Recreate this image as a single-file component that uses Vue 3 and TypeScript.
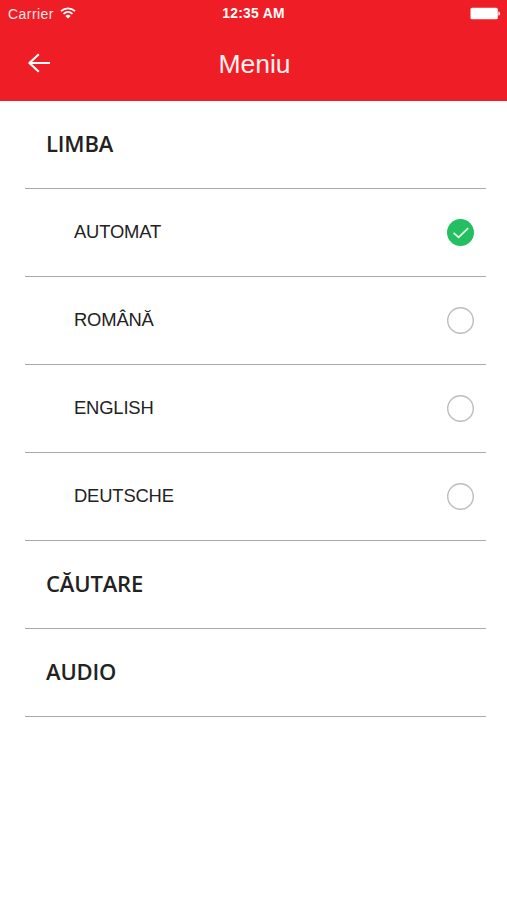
<script setup lang="ts">
import { ref } from 'vue'

interface Language {
  id: string
  label: string
}

const languages: Language[] = [
  { id: 'auto', label: 'AUTOMAT' },
  { id: 'ro', label: 'ROMÂNĂ' },
  { id: 'en', label: 'ENGLISH' },
  { id: 'de', label: 'DEUTSCHE' },
]
const sections: string[] = ['CĂUTARE', 'AUDIO']
const selected = ref<string>('auto')
</script>

<template>
  <div class="screen">
    <header class="header">
      <div class="status">
        <div class="carrier">
          <span>Carrier</span>
          <svg class="wifi" width="16" height="12" viewBox="0 0 16 12" fill="none" stroke="#fff">
            <path d="M1 4.2C5 .4 11 .4 15 4.2" stroke-width="1.8" />
            <path d="M3.5 6.9C6.2 4.4 9.8 4.4 12.5 6.9" stroke-width="1.7" />
            <path d="M5.4 8.9C7 7.5 9 7.5 10.6 8.9L8 11.6Z" fill="#fff" stroke="none" />
          </svg>
        </div>
        <div class="time">12:35 AM</div>
        <svg class="battery" width="31" height="13" viewBox="0 0 31 13" fill="#fff">
          <rect x="0.5" y="0.7" width="27.3" height="11.6" rx="1.5" />
          <path d="M28.4 4.4C30.7 4.8 30.7 8.2 28.4 8.6Z" />
        </svg>
      </div>
      <div class="nav">
        <button class="back" type="button" aria-label="Înapoi">
          <svg width="24" height="20" viewBox="0 0 24 20" fill="none" stroke="#fff" stroke-width="2.2" stroke-linejoin="round">
            <path d="M23 10H2.4M11.8 1.2L2.4 10L11.8 18.8" />
          </svg>
        </button>
        <h1 class="title">Meniu</h1>
        <span></span>
      </div>
    </header>

    <main class="menu">
      <h2 class="row section">LIMBA</h2>
      <button
        v-for="language in languages"
        :key="language.id"
        class="row option"
        type="button"
        @click="selected = language.id"
      >
        <span class="label">{{ language.label }}</span>
        <svg class="radio" width="28" height="28" viewBox="0 0 28 28" fill="none">
          <template v-if="selected === language.id">
            <circle cx="14.5" cy="13.5" r="13.5" fill="#23bf60" />
            <path d="M7.6 13.9L12.6 18.4L22.2 9.1" stroke="#e9faef" stroke-width="1.7" />
          </template>
          <circle v-else cx="14.5" cy="13.5" r="12.8" stroke="#bdbdbd" stroke-width="1.4" />
        </svg>
      </button>
      <h2 v-for="section in sections" :key="section" class="row section">{{ section }}</h2>
    </main>
  </div>
</template>

<style>
body {
  background: #fff;
}
</style>

<style scoped>
.screen {
  min-height: 900px;
  background: #fff;
  color: #222;
  font-family: 'Liberation Sans', Arial, sans-serif;
}

.header {
  height: 101px;
  box-sizing: border-box;
  background: #ef1d25;
  color: #fff;
}

.status {
  display: grid;
  grid-template-columns: 1fr auto 1fr;
  align-items: center;
  height: 27px;
  padding: 0 6px 0 8px;
  font-size: 14px;
}

.carrier {
  display: flex;
  align-items: center;
  gap: 6px;
  letter-spacing: 0.45px;
  color: #ffe5e6;
}

.wifi {
  margin-bottom: 2px;
}

.time {
  margin-right: 2px;
  font-weight: 700;
  font-size: 13.8px;
  letter-spacing: 0.3px;
}

.battery {
  justify-self: end;
}

.nav {
  display: grid;
  grid-template-columns: 1fr auto 1fr;
  align-items: center;
  height: 73px;
  padding: 0 25px 0 27px;
}

button {
  border: 0;
  margin: 0;
  padding: 0;
  background: none;
  color: inherit;
  font-family: inherit;
  text-align: left;
}

.back {
  display: flex;
  padding-bottom: 1px;
}

.title {
  margin: 0;
  font-size: 26.5px;
  font-weight: 400;
  line-height: 32px;
  color: #fff0f0;
}

.menu {
  display: flex;
  flex-direction: column;
  padding: 0 21px 0 25px;
}

.row {
  display: flex;
  align-items: center;
  box-sizing: border-box;
  height: 88px;
  margin: 0;
  border-bottom: 1px solid #a9a9a9;
}

.section {
  padding: 0 0 3px 21px;
  font-family: 'Open Sans', 'Noto Sans', sans-serif;
  font-size: 22px;
  font-weight: 600;
  letter-spacing: -0.15px;
}

.option {
  justify-content: space-between;
  padding: 0 12px 0 49px;
  font-size: 18.4px;
  letter-spacing: -0.17px;
}

.label {
  padding-bottom: 2px;
}
</style>
